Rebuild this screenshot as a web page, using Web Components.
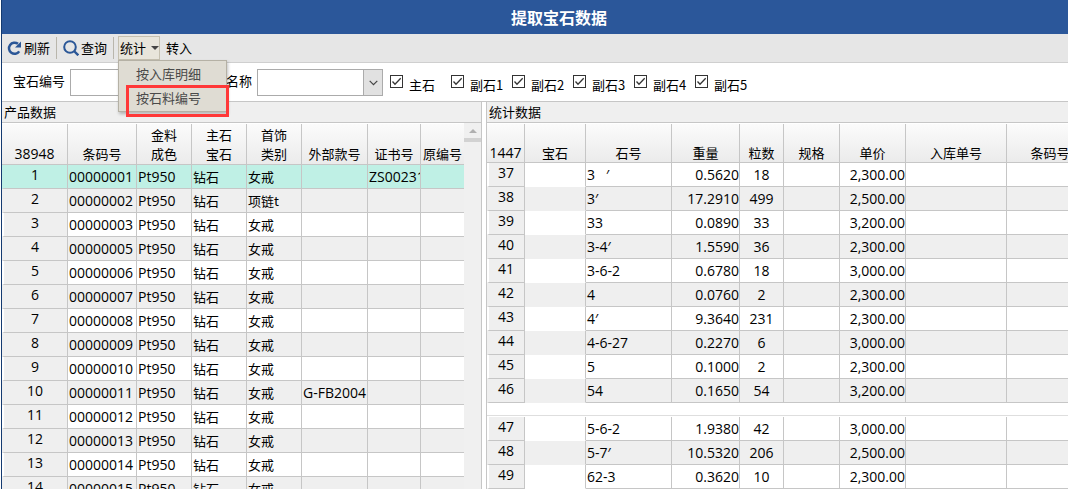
<!DOCTYPE html>
<html lang="zh-CN">
<head>
<meta charset="utf-8">
<meta name="viewport" content="width=device-width, initial-scale=1">
<title>提取宝石数据</title>
<style>
  html, body {
    margin: 0;
    height: 100%;
    overflow: hidden;
    background: #fff;
    color: #000;
    font: 13px/20px "Noto Sans CJK SC", sans-serif;
  }
</style>
</head>
<body>
<gem-app></gem-app>

<script>
const FONT = '"Noto Sans CJK SC", sans-serif';

class ToolButton extends HTMLElement {
  connectedCallback() {
    this.attachShadow({ mode: 'open' });
    this.shadowRoot.innerHTML = `
      <style>
        :host { display: block; }
        button {
          display: flex;
          align-items: center;
          gap: 2px;
          height: 24px;
          padding: 0 1px;
          border: 1px solid transparent;
          background: none;
          color: #000;
          font: 13px/20px ${FONT};
        }
        :host([open]) button {
          gap: 5px;
          padding: 0 0 0 1px;
          border-color: #c5c0b0;
          background: #e8e5db;
        }
        .caret {
          border: 4px solid transparent;
          border-top-color: #444;
          border-bottom: 0;
        }
      </style>
      <button type="button">
        <slot name="icon"></slot>
        <slot></slot>
        ${this.hasAttribute('open') ? '<span class="caret"></span>' : ''}
      </button>
    `;
  }
}
customElements.define('tool-button', ToolButton);

class DropMenu extends HTMLElement {
  connectedCallback() {
    const items = this.getAttribute('items').split(',');
    this.attachShadow({ mode: 'open' });
    this.shadowRoot.innerHTML = `
      <style>
        :host {
          display: block;
          box-sizing: border-box;
          width: 109px;
          padding: 1px 0;
          border: 1px solid #b5b1a5;
          background: #dfdcd3;
          box-shadow: 1px 2px 3px rgba(0, 0, 0, 0.25);
        }
        button {
          position: relative;
          display: block;
          width: 100%;
          height: 24px;
          padding: 0 0 0 17px;
          border: 0;
          background: none;
          color: #4a4a4a;
          font: 13px/24px ${FONT};
          text-align: left;
        }
        /* red frame drawn over the marked entry */
        button.marked::after {
          content: "";
          position: absolute;
          inset: -1px -3px -7px 7px;
          border: 3px solid #ff3838;
        }
      </style>
      ${items.map((t, i) => `<button type="button" class="${i === 1 ? 'marked' : ''}">${t}</button>`).join('')}
    `;
  }
}
customElements.define('drop-menu', DropMenu);

class ToolBar extends HTMLElement {
  connectedCallback() {
    this.attachShadow({ mode: 'open' });
    this.shadowRoot.innerHTML = `
      <style>
        :host {
          display: flex;
          align-items: center;
          height: 28px;
          padding-left: 3px;
          border-bottom: 1px solid #cfcfcf;
          background: #e6e6e6;
        }
        .sep {
          width: 1px;
          height: 22px;
          margin: 0 4px;
          background: #b9b6ac;
        }
        .menu-anchor { position: relative; margin-right: 4px; }
        drop-menu {
          position: absolute;
          top: 24px;
          left: 0;
          z-index: 10;
        }
        svg { display: block; }
      </style>
      <tool-button>
        <svg slot="icon" width="15" height="16" viewBox="0 0 15 16">
          <path d="M12.2 11.4A5.6 5.6 0 1 1 11 3.8" fill="none" stroke="#2b5797" stroke-width="2.5"/>
          <path d="M14 1.5V7.5H8Z" fill="#2b5797"/>
        </svg>刷新</tool-button>
      <span class="sep"></span>
      <tool-button>
        <svg slot="icon" width="16" height="16" viewBox="0 0 16 16">
          <circle cx="7" cy="7" r="5.8" fill="none" stroke="#2b5797" stroke-width="2"/>
          <path d="M11 11l4.3 4.3" stroke="#2b5797" stroke-width="2.4"/>
        </svg>查询</tool-button>
      <span class="sep"></span>
      <div class="menu-anchor">
        <tool-button open>统计</tool-button>
        <drop-menu items="按入库明细,按石料编号"></drop-menu>
      </div>
      <tool-button>转入</tool-button>
    `;
  }
}
customElements.define('tool-bar', ToolBar);

class CheckField extends HTMLElement {
  connectedCallback() {
    this.attachShadow({ mode: 'open' });
    this.shadowRoot.innerHTML = `
      <style>
        :host { display: block; width: 61px; }
        label { display: flex; align-items: flex-start; gap: 6px; white-space: nowrap; }
        .box { display: grid; flex: none; }
        .box > * { grid-area: 1 / 1; }
        input {
          appearance: none;
          width: 13px;
          height: 13px;
          margin: 0;
          border: 1px solid #333;
          background: #fff;
        }
        svg { pointer-events: none; }
      </style>
      <label>
        <span class="box">
          <input type="checkbox" checked>
          <svg width="13" height="13" viewBox="0 0 13 13">
            <path d="M2.5 6.5L5 9.2L10.7 3.3" fill="none" stroke="#333" stroke-width="1.3"/>
          </svg>
        </span>
        <span><slot></slot></span>
      </label>
    `;
  }
}
customElements.define('check-field', CheckField);

class FilterBar extends HTMLElement {
  connectedCallback() {
    this.attachShadow({ mode: 'open' });
    this.shadowRoot.innerHTML = `
      <style>
        :host {
          display: flex;
          align-items: flex-start;
          height: 32px;
          padding: 6px 0 0 11px;
          border-bottom: 1px solid #c6c6c6;
          background: #fff;
        }
        label { line-height: 24px; }
        input, select {
          box-sizing: border-box;
          height: 27px;
          margin: 0;
          border: 1px solid #ababab;
          border-radius: 0;
          background: #fff;
          font: 13px/20px ${FONT};
        }
        input { width: 120px; margin: 0 36px 0 5px; }
        .combo { position: relative; margin: 0 7px 0 5px; }
        select { appearance: none; display: block; width: 126px; }
        .arrow {
          position: absolute;
          top: 0;
          right: 0;
          box-sizing: border-box;
          display: grid;
          place-items: center;
          width: 20px;
          height: 27px;
          border: 1px solid #ababab;
          background: #e1e1e1;
          pointer-events: none;
        }
        .checks { display: flex; padding-top: 6px; }
      </style>
      <label for="code">宝石编号</label>
      <input id="code" type="text">
      <label for="name">名称</label>
      <div class="combo">
        <select id="name"><option></option></select>
        <span class="arrow">
          <svg width="9" height="6" viewBox="0 0 9 6"><path d="M.7 .8L4.5 4.6L8.3 .8" fill="none" stroke="#444" stroke-width="1.2"/></svg>
        </span>
      </div>
      <div class="checks">
        ${['主石', '副石1', '副石2', '副石3', '副石4', '副石5'].map(t => `<check-field>${t}</check-field>`).join('')}
      </div>
    `;
  }
}
customElements.define('filter-bar', FilterBar);

// cols: [title, width, align, kind]; the first column is the row number
class DataGrid extends HTMLElement {
  set data({ cols, rows, head = true, selected }) {
    if (!this.shadowRoot) this.attachShadow({ mode: 'open' });
    const total = cols.reduce((sum, c) => sum + c[1], 0);
    const last = this.hasAttribute('open-end') ? 'open-end' : '';
    const cell = (v, i) => {
      const cls = `${cols[i][2] || ''} ${cols[i][3] || ''} ${/^[\x00-\x7f′]+$/.test(v) ? 'latin' : ''}`;
      return i === 0 ? `<th scope="row" class="${cls}">${v}</th>` : `<td class="${cls}">${v}</td>`;
    };
    this.shadowRoot.innerHTML = `
      <style>
        :host { display: block; padding-top: 1px; background: #fff; }
        table {
          width: ${total}px;
          table-layout: fixed;
          border-collapse: separate;
          border-spacing: 0;
        }
        th, td {
          box-sizing: border-box;
          padding: 0;
          border-right: 1px solid #c6c6c6;
          border-bottom: 1px solid #c6c6c6;
          font-weight: normal;
          white-space: pre;
          overflow: hidden;
        }
        thead th {
          height: var(--head-height, 39px);
          padding-bottom: var(--head-pad, 0);
          background: linear-gradient(#fbfbfb, #ebebeb);
          line-height: 19px;
          text-align: center;
          vertical-align: bottom;
        }
        tbody tr { background: #fff; }
        tbody tr.alt { background: #efefef; }
        tbody td { height: 24px; padding: 1px 0 0 1px; line-height: 21px; vertical-align: top; }
        tbody th {
          height: 24px;
          border-left: 2px solid transparent;
          padding-right: 1px;
          background: #efefef;
          background-clip: padding-box;
          line-height: 20px;
          vertical-align: top;
        }
        .latin { font-family: "Open Sans", "Noto Sans", sans-serif; font-size: 14px; }
        tbody tr.selected, tbody tr.selected th { background: #bff0e5; }
        td.right { padding-left: 0; text-align: right; }
        td.center { padding-left: 0; text-align: center; }
        td.bare { border-bottom-color: transparent; }
        table.open-end tr > :last-child { border-right: 0; }
      </style>
      <table class="${last}">
        <colgroup>${cols.map(c => `<col style="width:${c[1]}px">`).join('')}</colgroup>
        ${head ? `<thead><tr>${cols.map(c => `<th scope="col" class="${/^\d+$/.test(c[0]) ? 'latin' : ''}">${c[0]}</th>`).join('')}</tr></thead>` : ''}
        <tbody>${rows.map((r, n) => `<tr class="${r[0] % 2 ? '' : 'alt'} ${n === selected ? 'selected' : ''}">${r.map(cell).join('')}</tr>`).join('')}</tbody>
      </table>
    `;
  }
}
customElements.define('data-grid', DataGrid);

class DataPanel extends HTMLElement {
  connectedCallback() {
    this.attachShadow({ mode: 'open' });
    this.shadowRoot.innerHTML = `
      <style>
        :host { display: flex; flex-direction: column; min-width: 0; overflow: hidden; }
        h2 {
          flex: none;
          margin: 0;
          padding-left: 2px;
          border-bottom: 1px solid #c6c6c6;
          background: #efefef;
          font-size: 13px;
          font-weight: normal;
          line-height: 20px;
        }
        .body { flex: 1; display: flex; min-height: 0; overflow: hidden; }
      </style>
      <h2>${this.getAttribute('heading')}</h2>
      <div class="body"><slot></slot></div>
    `;
  }
}
customElements.define('data-panel', DataPanel);

class GridScrollbar extends HTMLElement {
  connectedCallback() {
    this.attachShadow({ mode: 'open' });
    this.shadowRoot.innerHTML = `
      <style>
        :host { display: block; flex: 1; background: #f0f0f0; }
        .up { display: grid; place-items: center; height: 15px; }
        .up::before {
          content: "";
          border: 4px solid transparent;
          border-top: 0;
          border-bottom-color: #b0b0b0;
        }
        .thumb { height: 4px; background: #d2d2d2; }
      </style>
      <div class="up"></div>
      <div class="thumb"></div>
    `;
  }
}
customElements.define('grid-scrollbar', GridScrollbar);

const productCols = [
  ['38948', 66, 'center'], ['条码号', 69], ['金料<br>成色', 55], ['主石<br>宝石', 55],
  ['首饰<br>类别', 55], ['外部款号', 66], ['证书号', 53], ['原编号', 43],
];
const productRows = Array.from({ length: 14 }, (_, i) => {
  const n = i + 1;
  const code = String(n > 3 ? n + 1 : n).padStart(8, '0');
  return [n, code, 'Pt950', '钻石', n === 2 ? '项链t' : '女戒', n === 10 ? 'G-FB2004' : '', n === 1 ? 'ZS00231' : '', ''];
});

const statCols = [
  ['1447', 38, 'center'], ['宝石', 61, '', 'bare'], ['石号', 86], ['重量', 68, 'right'], ['粒数', 44, 'center'],
  ['规格', 56], ['单价', 66, 'right'], ['入库单号', 101], ['条码号', 87],
];
const statRows = [
  [37, '3   ′', '0.5620', 18, '2,300.00'],
  [38, '3′', '17.2910', 499, '2,500.00'],
  [39, '33', '0.0890', 33, '3,200.00'],
  [40, '3-4′', '1.5590', 36, '2,300.00'],
  [41, '3-6-2', '0.6780', 18, '3,000.00'],
  [42, '4', '0.0760', 2, '2,300.00'],
  [43, '4′', '9.3640', 231, '2,300.00'],
  [44, '4-6-27', '0.2270', 6, '3,000.00'],
  [45, '5', '0.1000', 2, '2,300.00'],
  [46, '54', '0.1650', 54, '3,200.00'],
  [47, '5-6-2', '1.9380', 42, '3,000.00'],
  [48, '5-7′', '10.5320', 206, '2,500.00'],
  [49, '62-3', '0.3620', 10, '2,300.00'],
].map(([n, stone, weight, count, price]) => [n, '', stone, weight, count, '', price, '', '']);

class GemApp extends HTMLElement {
  connectedCallback() {
    this.attachShadow({ mode: 'open' });
    this.shadowRoot.innerHTML = `
      <style>
        :host {
          display: flex;
          flex-direction: column;
          height: 100vh;
          box-sizing: border-box;
          margin-left: 1px;
          border-left: 1px solid #143a70;
          overflow: hidden;
        }
        h1 {
          flex: none;
          margin: 0;
          padding-left: 48px;
          background: #2b579a;
          color: #fff;
          font-size: 16px;
          line-height: 34px;
          text-align: center;
        }
        tool-bar, filter-bar { flex: none; }
        main { flex: 1; display: flex; gap: 4px; min-height: 0; }
        #products {
          flex: none;
          width: 479px;
          border-right: 1px solid #c6c6c6;
          --head-height: 41px;
          --head-pad: 1px;
        }
        #stats { flex: 1; border-left: 1px solid #c6c6c6; }
        .stack { min-width: 0; }
        .split { height: 12px; border-bottom: 1px solid #dedede; }
      </style>
      <h1>提取宝石数据</h1>
      <tool-bar></tool-bar>
      <filter-bar></filter-bar>
      <main>
        <data-panel id="products" heading="产品数据">
          <data-grid id="product-grid" open-end></data-grid>
          <grid-scrollbar></grid-scrollbar>
        </data-panel>
        <data-panel id="stats" heading="统计数据">
          <div class="stack">
            <data-grid id="stat-top"></data-grid>
            <div class="split"></div>
            <data-grid id="stat-bottom"></data-grid>
          </div>
        </data-panel>
      </main>
    `;
    const grid = id => this.shadowRoot.getElementById(id);
    grid('product-grid').data = { cols: productCols, rows: productRows, selected: 0 };
    grid('stat-top').data = { cols: statCols, rows: statRows.slice(0, 10) };
    grid('stat-bottom').data = { cols: statCols, rows: statRows.slice(10), head: false };
  }
}
customElements.define('gem-app', GemApp);
</script>
</body>
</html>
